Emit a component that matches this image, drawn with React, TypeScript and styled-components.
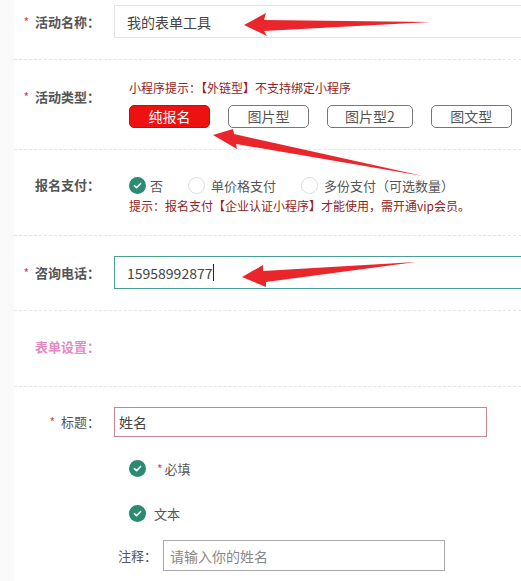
import React from "react";
import styled, { createGlobalStyle } from "styled-components";

const GlobalStyle = createGlobalStyle`
  html, body { margin: 0; padding: 0; background: #fafafa; }
  body { font-family: "Noto Sans CJK SC", "Noto Sans", sans-serif; color: #555; }
  * { box-sizing: border-box; }
`;

const Page = styled.div`
  position: relative;
  width: 521px;
  height: 581px;
  overflow: hidden;
  background: #fafafa;
`;

const Panel = styled.div`
  margin-left: 14px;
  height: 100%;
  background: #fff;
`;

const Row = styled.div<{ $pt: number; $pb: number; $divided?: boolean; $center?: boolean }>`
  display: flex;
  align-items: ${(p) => (p.$center ? "center" : "flex-start")};
  padding: ${(p) => p.$pt}px 0 ${(p) => p.$pb}px;
  border-bottom: ${(p) => (p.$divided ? "1px dashed #e6e6e6" : "none")};
`;

const Label = styled.div<{ $mt?: number; $bold?: boolean; $pink?: boolean }>`
  width: 86px;
  flex-shrink: 0;
  text-align: right;
  font-size: 13px;
  line-height: 20px;
  margin-top: ${(p) => p.$mt ?? 0}px;
  font-weight: ${(p) => (p.$bold ? 700 : 400)};
  color: ${(p) => (p.$pink ? "#e58bc3" : "#555")};
  white-space: nowrap;
`;

const Star = styled.span`
  color: #d9434a;
  font-size: 12px;
  font-weight: 400;
  margin-right: 6px;
`;

const Content = styled.div<{ $indent?: number }>`
  margin-left: 14px;
  padding-left: ${(p) => p.$indent ?? 0}px;
  flex: 1;
  min-width: 0;
`;

const Field = styled.div<{ $w: number; $h: number; $border: string; $pl: number; $placeholder?: boolean }>`
  width: ${(p) => p.$w}px;
  height: ${(p) => p.$h}px;
  border: 1px solid ${(p) => p.$border};
  padding-left: ${(p) => p.$pl}px;
  display: flex;
  align-items: center;
  font-size: 14px;
  color: ${(p) => (p.$placeholder ? "#888" : "#444")};
  background: #fff;
  white-space: nowrap;
`;

const Caret = styled.span`
  display: inline-block;
  width: 1px;
  height: 17px;
  background: #222;
  margin-left: 1px;
`;

const Hint = styled.div<{ $mt?: number }>`
  font-size: 12px;
  line-height: 18px;
  color: #932222;
  margin-top: ${(p) => p.$mt ?? 0}px;
  white-space: nowrap;
`;

const ButtonRow = styled.div`
  display: flex;
  gap: 18px;
  margin-top: 8px;
`;

const TypeButton = styled.button<{ $active?: boolean }>`
  min-width: 81px;
  height: 23px;
  padding: 0 17px;
  border-radius: 5px;
  border: 1px solid ${(p) => (p.$active ? "#c40d10" : "#777")};
  background: ${(p) => (p.$active ? "#ee1111" : "#fff")};
  color: ${(p) => (p.$active ? "#fff" : "#555")};
  font-family: inherit;
  font-size: 14px;
  line-height: 21px;
  cursor: pointer;
  white-space: nowrap;
`;

const RadioGroup = styled.div`
  display: flex;
  align-items: center;
  gap: 25px;
  height: 20px;
`;

const RadioItem = styled.label<{ $gap?: number }>`
  display: flex;
  align-items: center;
  gap: ${(p) => p.$gap ?? 6}px;
  font-size: 13px;
  color: #555;
  white-space: nowrap;
`;

const EmptyDot = styled.span`
  width: 17px;
  height: 17px;
  border-radius: 50%;
  border: 1px solid #dcdcdc;
  background: #fff;
  flex-shrink: 0;
`;

const CheckDotWrap = styled.span`
  width: 17px;
  height: 17px;
  border-radius: 50%;
  background: #2b8a72;
  display: inline-flex;
  align-items: center;
  justify-content: center;
  flex-shrink: 0;
`;

const CheckDot = () => (
  <CheckDotWrap>
    <svg width="11" height="11" viewBox="0 0 12 12">
      <path d="M2.6 6.2 L5 8.4 L9.4 3.8" fill="none" stroke="#fff" strokeWidth="1.8" strokeLinecap="round" strokeLinejoin="round" />
    </svg>
  </CheckDotWrap>
);

const Options = styled.div`
  padding-left: 100px;
  display: flex;
  flex-direction: column;
`;

const OptionItem = styled.div<{ $mt: number }>`
  display: flex;
  align-items: center;
  gap: 8px;
  padding-left: 15px;
  margin-top: ${(p) => p.$mt}px;
  height: 20px;
  font-size: 13px;
  color: #555;
`;

const SmallStar = styled.span`
  color: #d9434a;
  font-size: 12px;
  margin-left: 3px;
  margin-right: 2px;
`;

const NoteRow = styled.div`
  display: flex;
  align-items: center;
  gap: 6px;
  padding-left: 4px;
  margin-top: 17px;
`;

const NoteLabel = styled.span`
  font-size: 13px;
  color: #555;
  white-space: nowrap;
`;

const Overlay = styled.svg`
  position: absolute;
  left: 0;
  top: 0;
  pointer-events: none;
`;

export default function App() {
  return (
    <>
      <GlobalStyle />
      <Page>
        <Panel>
          <Row $pt={5} $pb={21} $divided $center>
            <Label $bold>
              <Star>*</Star>活动名称：
            </Label>
            <Content>
              <Field $w={420} $h={33} $border="#e3e3e3" $pl={12}>
                我的表单工具
              </Field>
            </Content>
          </Row>

          <Row $pt={19} $pb={21} $divided>
            <Label $bold $mt={8}>
              <Star>*</Star>活动类型：
            </Label>
            <Content $indent={15}>
              <Hint>小程序提示：【外链型】不支持绑定小程序</Hint>
              <ButtonRow>
                <TypeButton $active>纯报名</TypeButton>
                <TypeButton>图片型</TypeButton>
                <TypeButton>图片型2</TypeButton>
                <TypeButton>图文型</TypeButton>
              </ButtonRow>
            </Content>
          </Row>

          <Row $pt={25} $pb={20} $divided>
            <Label $bold>报名支付：</Label>
            <Content $indent={15}>
              <RadioGroup>
                <RadioItem $gap={4}>
                  <CheckDot />否
                </RadioItem>
                <RadioItem>
                  <EmptyDot />单价格支付
                </RadioItem>
                <RadioItem>
                  <EmptyDot />多份支付（可选数量）
                </RadioItem>
              </RadioGroup>
              <Hint $mt={2}>提示：报名支付【企业认证小程序】才能使用，需开通vip会员。</Hint>
            </Content>
          </Row>

          <Row $pt={20} $pb={21} $divided $center>
            <Label $bold>
              <Star>*</Star>咨询电话：
            </Label>
            <Content>
              <Field $w={420} $h={33} $border="#4a9e92" $pl={12}>
                15958992877
                <Caret />
              </Field>
            </Content>
          </Row>

          <Row $pt={26} $pb={29} $divided>
            <Label $bold $pink>
              表单设置：
            </Label>
          </Row>

          <Row $pt={20} $pb={0} $center>
            <Label>
              <Star>*</Star>标题：
            </Label>
            <Content>
              <Field $w={373} $h={30} $border="#c98690" $pl={4}>
                姓名
              </Field>
            </Content>
          </Row>

          <Options>
            <OptionItem $mt={21}>
              <CheckDot />
              <span>
                <SmallStar>*</SmallStar>必填
              </span>
            </OptionItem>
            <OptionItem $mt={25}>
              <CheckDot />
              文本
            </OptionItem>
            <NoteRow>
              <NoteLabel>注释：</NoteLabel>
              <Field $w={282} $h={31} $border="#aaa" $pl={6} $placeholder>
                请输入你的姓名
              </Field>
            </NoteRow>
          </Options>
        </Panel>

        <Overlay width="521" height="581" viewBox="0 0 521 581">
          <path d="M244,25 L266,13 L264,20 L431,22 L264,31 L267,36 Z" fill="#e9262b" />
          <path d="M213,135 L233,129 L234,134 L423,176 L236,144 L237,149 Z" fill="#e9262b" />
          <path d="M242,277 L263,265 L263,271 L416,262 L266,282 L266,287 Z" fill="#e9262b" />
        </Overlay>
      </Page>
    </>
  );
}
